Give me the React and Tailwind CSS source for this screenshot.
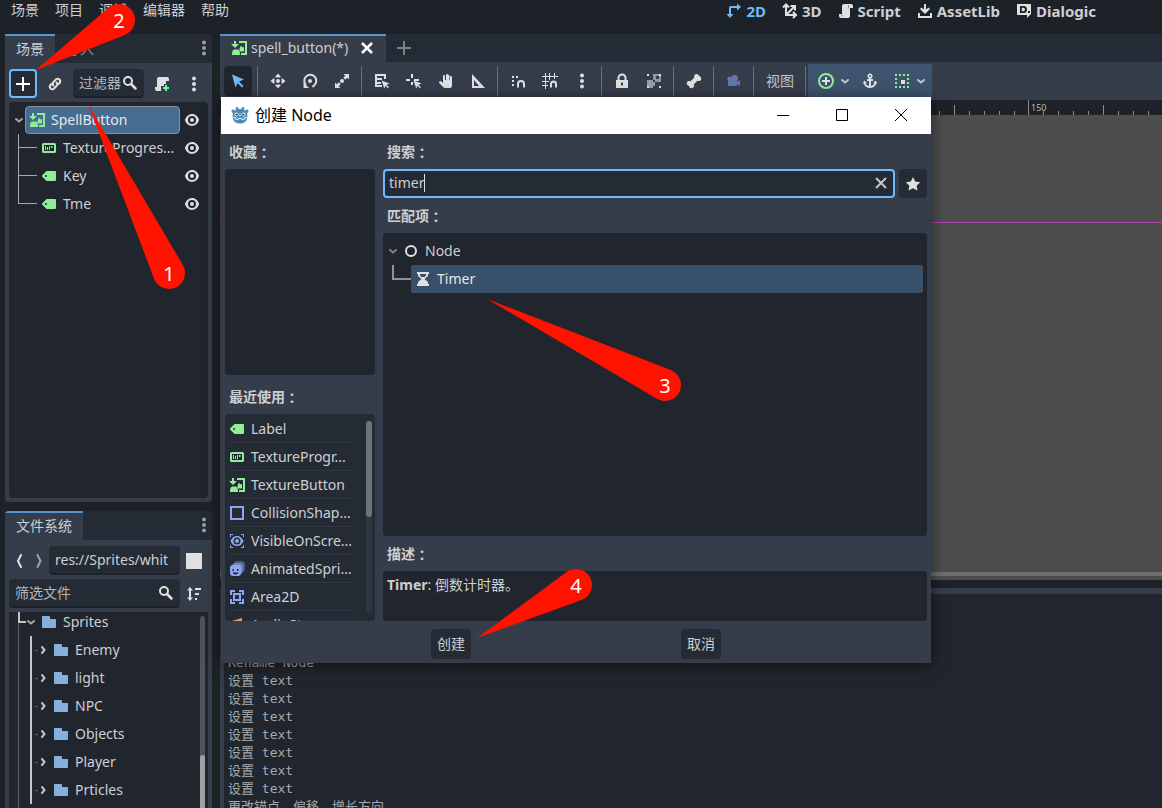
import { useState } from 'react'

const icons = {
  label: <path d="M6 3a1 1 0 0 0-.7.3l-4 4a1 1 0 0 0 0 1.400l4 4A1 1 0 0 0 6 13h8a1 1 0 0 0 1-1V4a1 1 0 0 0-1-1zM5 7a1 1 0 0 1 0 2 1 1 0 0 1 0-2z" fillRule="evenodd" />,
  progress: (
    <>
      <rect x="2" y="4" width="12" height="8" rx="0.5" fill="none" stroke="currentColor" strokeWidth="2" />
      <path d="M4 6h1v4H4zM6 7h1v3H6zM8 6h1v4H8zM10 6h1.500v2H10z" />
    </>
  ),
  texButton: (
    <>
      <path d="M3 1h2v3h3L4 8 0 4h3zM1 15c0-3 .5-5 2-5.500h4c1.500.5 2 2.500 2 5.500z" />
      <path d="M8 1h8v14h-6v-2h4V3H8z" />
      <path d="M10 5.500l1 1.500 2 .5v4H8.500v-3z" />
    </>
  ),
  rect: <rect x="2" y="2" width="12" height="12" fill="none" stroke="currentColor" strokeWidth="2" />,
  visible: (
    <>
      <path d="M1 1h3v1H2v2H1zM12 1h3v3h-1V2h-2zM1 12h1v2h2v1H1zM14 12h1v3h-3v-1h2z" />
      <path d="M8 3C5 3 2.500 5 1.500 8 2.500 11 5 13 8 13s5.500-2 6.500-5C13.500 5 11 3 8 3z M8 4.500a3.500 3.500 0 0 1 0 7 3.500 3.500 0 0 1 0-7z" fillRule="evenodd" />
      <circle cx="8" cy="8" r="2" />
    </>
  ),
  sprite: (
    <>
      <rect x="5" y="0" width="11" height="11" rx="3.500" opacity="0.4" />
      <rect x="3" y="2" width="11" height="11" rx="3.500" opacity="0.6" />
      <rect x="1" y="4" width="11" height="11" rx="3" />
      <path d="M3.500 8h1.500v2H3.500zM8 8h1.500v2H8zM3.500 11.500h6c-.6 1.500-1.700 2-3 2s-2.400-.5-3-2z" fill="#252b34" />
    </>
  ),
  area: (
    <path d="M1 1h5v2H3v3H1zM10 1h5v5h-2V3h-3zM1 10h2v3h3v2H1zM13 10h2v5h-5v-2h3zM4 4h8v8H4zm2 2v4h4V6z" fillRule="evenodd" />
  ),
  audio: <path d="M3 15V4l10-3v14z" />,
  eye: (
    <path d="M8 2C5.400 2 2.200 3.900 1 7.700v.6C2.200 12.200 5.500 14 8 14s5.800-1.800 7-5.700v-.6C13.900 3.900 10.600 2 8 2zm0 2a4 4 0 0 1 0 8 4 4 0 0 1 0-8zm0 2a2 2 0 0 0 0 4 2 2 0 0 0 0-4z" fillRule="evenodd" />
  ),
  folder: <path d="M2 2a1 1 0 0 0-1 1v10a1 1 0 0 0 1 1h12a1 1 0 0 0 1-1V6a1 1 0 0 0-1-1H9V3a1 1 0 0 0-1-1z" />,
  down: <path d="M5 7l3 2.500L11 7" fill="none" stroke="currentColor" strokeWidth="2" strokeLinecap="round" />,
  right: <path d="M7 5l2.500 3L7 11" fill="none" stroke="currentColor" strokeWidth="2" strokeLinecap="round" />,
  back: <path d="M10 2L7 8l3 6" fill="none" stroke="currentColor" strokeWidth="2" strokeLinecap="round" />,
  forward: <path d="M6.500 2l3 6-3 6" fill="none" stroke="currentColor" strokeWidth="2" strokeLinecap="round" />,
  plus: <path d="M7 1h2v6h6v2H9v6H7V9H1V7h6z" />,
  link: (
    <g fill="none" stroke="currentColor" strokeWidth="2" strokeLinecap="round">
      <path d="M6.500 9.500a2.500 2.500 0 0 1 0-3.500l2.700-2.700a2.500 2.500 0 0 1 3.500 3.500L11.500 8" />
      <path d="M9.500 6.500a2.500 2.500 0 0 1 0 3.500l-2.700 2.700a2.500 2.500 0 0 1-3.500-3.500L4.500 8" />
    </g>
  ),
  search: (
    <g fill="none" stroke="currentColor" strokeWidth="2">
      <circle cx="6" cy="6" r="4" />
      <path d="M9 9l4.500 4.500" strokeWidth="2.500" strokeLinecap="round" />
    </g>
  ),
  script: (
    <>
      <path d="M6 1a2 2 0 0 0-2 2v8H1v2a2 2 0 0 0 2 2h7a2 2 0 0 0 2-2V5h3V3a2 2 0 0 0-2-2z" />
      <path d="M10.500 2v3.500M4 11v2.500" stroke="#1d2229" opacity="0.4" />
    </>
  ),
  scriptAdd: (
    <>
      <path d="M5 1a2 2 0 0 0-2 2v8H1v2a2 2 0 0 0 2 2h4v-5h3V8h2V5h3V3a2 2 0 0 0-2-2z" />
      <path d="M11 9h2v2h2v2h-2v2h-2v-2H9v-2h2z" fill="#5fff97" />
    </>
  ),
  dots: (
    <>
      <circle cx="8" cy="2.500" r="2" />
      <circle cx="8" cy="8" r="2" />
      <circle cx="8" cy="13.500" r="2" />
    </>
  ),
  sort: (
    <>
      <path d="M4 1l3 3.500H5v7h2L4 15l-3-3.500h2v-7H1z" />
      <path d="M9 2h6v2H9zM9 7h4v2H9zM9 12h2v2H9z" />
    </>
  ),
  close: <path d="M3 3l10 10M13 3L3 13" stroke="currentColor" strokeWidth="2.500" fill="none" />,
  clear: <path d="M3 3l10 10M13 3L3 13" stroke="currentColor" strokeWidth="2" fill="none" />,
  select: <path d="M2 1.500l12 5-5 2 4.500 4.500-1.500 1.500L7.500 10l-2 4.500z" />,
  move: (
    <>
      <circle cx="8" cy="8" r="2" />
      <path d="M8 .5L11 4 9.500 4.500h-3L5 4zM8 15.500L11 12l-1.500-.5h-3L5 12zM.5 8L4 5l.5 1.500v3L4 11zM15.500 8L12 5l-.5 1.500v3L12 11z" />
    </>
  ),
  rotate: (
    <>
      <path d="M4 12A6 6 0 1 1 12 12.500L10.500 14" fill="none" stroke="currentColor" strokeWidth="2" />
      <circle cx="8" cy="8" r="2" />
      <path d="M1.500 15V9.500l5.500 5.500z" />
    </>
  ),
  scale: (
    <>
      <path d="M9.500 1H15v5.500l-1.800-1.800-2 2-1.900-1.900 2-2zM6.500 15H1V9.500l1.800 1.800 2-2 1.900 1.900-2 2z" />
      <circle cx="8" cy="8" r="2" />
    </>
  ),
  listSelect: (
    <>
      <path d="M1 1h11v5h-2V3H3v2h5v2H3v2h4v2H3v1h5v2H1z" />
      <path d="M7.500 7.500l8 3-3 1.200 2.500 2.500-1 1-2.500-2.500-1.200 3z" />
    </>
  ),
  pivot: (
    <>
      <path d="M5 1h2v4H5zM0 6h4v2H0zM8 6h5v2H8zM5 9h2v3H5z" />
      <path d="M7.500 7.500l8 3-3 1.200 2.500 2.500-1 1-2.500-2.500-1.200 3z" />
    </>
  ),
  pan: (
    <path d="M9 1a1 1 0 0 0-1 1v5H7V3a1 1 0 0 0-2 0v7L3 8.300A1.300 1.300 0 0 0 1.200 10L5 14l1.500 1h6l1.500-1.500V4a1 1 0 0 0-2 0v3h-.5V2.500a1 1 0 0 0-1.500-.5A1 1 0 0 0 9 1z" />
  ),
  ruler: <path d="M2 1v14h13zm2 6l5 6H4z" fillRule="evenodd" />,
  smartSnap: (
    <>
      <path d="M2 3h2v2H2zM2 7h2v2H2zM2 11h2v2H2zM6 3h2v2H6z" />
      <path d="M8 14.500V11a3 3 0 0 1 6 0v3.500" fill="none" stroke="currentColor" strokeWidth="2" />
    </>
  ),
  gridSnap: (
    <>
      <path d="M3 0h1v3h3V0h1v3h4V0h1v3h3v1h-3v2h-1V4H8v3H7V4H4v4h3v1H4v3h2v1H4v3H3v-3H0v-1h3V9H0V8h3V4H0V3h3z" />
      <path d="M9 14.500V11a2.500 2.500 0 0 1 5 0v3.500" fill="none" stroke="currentColor" strokeWidth="2" />
    </>
  ),
  lock: (
    <>
      <path d="M4.500 7.500V5a3.500 3.500 0 0 1 7 0v2.500" fill="none" stroke="currentColor" strokeWidth="2" />
      <path d="M2 7h12v8H2zm5 2.500v3h2v-3z" fillRule="evenodd" />
    </>
  ),
  group: (
    <>
      <path d="M1 1h2v2H1zM13 1h2v2h-2zM1 13h2v2H1zM13 13h2v2h-2z" />
      <path d="M7 1h6v2h2v6h-6V7H7zm3 2v3h3V3z" fillRule="evenodd" opacity="0.55" />
      <path d="M1 7h6v2h2v4H7v2H3v-2H1z" opacity="0.6" />
    </>
  ),
  bone: (
    <path d="M10.500 1a2.500 2.500 0 0 0-2.200 3.600L4.600 8.300A2.500 2.500 0 1 0 3 12.900a2.500 2.500 0 1 0 4.700-1.500l3.700-3.700A2.500 2.500 0 1 0 13 3.100 2.500 2.500 0 0 0 10.500 1z" />
  ),
  camera: (
    <path d="M8.500 2a3 3 0 0 0-3 2.300A2.500 2.500 0 1 0 2 8v3.500A1.500 1.500 0 0 0 3.500 13h6a1.500 1.500 0 0 0 1.500-1.500V11l3 2V7l-3 2V7.300A3 3 0 0 0 8.500 2z" />
  ),
  circlePlus: (
    <>
      <circle cx="8" cy="8" r="7" fill="none" stroke="#8eef97" strokeWidth="2" />
      <path d="M7 4h2v3h3v2H9v3H7V9H4V7h3z" />
    </>
  ),
  anchor: (
    <>
      <circle cx="8" cy="3" r="1.700" fill="none" stroke="currentColor" strokeWidth="1.600" />
      <path d="M7 5h2v1h2v2H9v4.800c1.800-.3 3-1.300 3.500-2.800L11 10l2.500-2.500 2 3-1.200-.2C13.600 13.500 11 15 8 15s-5.600-1.500-6.300-4.700l-1.200.2 2-3L5 10l-1.500.2C4 11.500 5.200 12.500 7 12.800V8H5V6h2z" />
    </>
  ),
  container: (
    <>
      <path d="M1 1h2v2H1zM5 1h2v2H5zM9 1h2v2H9zM13 1h2v2h-2zM1 13h2v2H1zM5 13h2v2H5zM9 13h2v2H9zM13 13h2v2h-2zM1 5h2v2H1zM1 9h2v2H1zM13 5h2v2h-2zM13 9h2v2h-2z" fill="#8eef97" />
      <path d="M7 7h4v4H7z" />
    </>
  ),
  twoD: <path d="M3 5v6H.5L4 15l3.500-4H5V5h6v2.500L15 4l-4-3.500V3H5a2 2 0 0 0-2 2z" />,
  threeD: (
    <g fill="none" stroke="currentColor" strokeWidth="2">
      <path d="M4 2v10h9M4 12l8-8" />
      <path d="M1 4.500L4 1.500l3 3M11 9l3 3-3 3M8.500 3H13v4.500" />
    </g>
  ),
  assetLib: (
    <>
      <path d="M1 10h2v3h10v-3h2v5H1z" />
      <path d="M7 1h2v5.500l2.500-2L13 6l-5 5-5-5 1.500-1.500 2.500 2z" />
    </>
  ),
  dialogic: (
    <path d="M1 1h14v10l-4 4v-3H1zm3 2v7h3.500a3.500 3.500 0 0 0 0-7zm1.800 1.800h1.500a1.700 1.700 0 0 1 0 3.400H5.800zM12 8v2h2V8z" fillRule="evenodd" />
  ),
  star: <path d="M8 1l2.200 4.500 5 .7-3.600 3.500.9 4.900L8 12.300l-4.500 2.300.9-4.900L.8 6.200l5-.7z" />,
  node: <circle cx="8" cy="8" r="5" fill="none" stroke="currentColor" strokeWidth="2" />,
  timer: <path d="M2 1h12v2h-1v2l-3.500 3L13 11v2h1v2H2v-2h1v-2l3.500-3L3 5V3H2zm3 2v1.500L6.500 6h3L11 4.500V3z" fillRule="evenodd" />,
}

function Icon({ name, className = '' }) {
  return (
    <svg viewBox="0 0 16 16" className={`w-4 h-4 flex-shrink-0 ${className}`} fill="currentColor" aria-hidden="true">
      {icons[name]}
    </svg>
  )
}

function GodotLogo() {
  return (
    <svg viewBox="0 0 18 18" className="w-[18px] h-[18px] flex-shrink-0" aria-hidden="true">
      <path
        d="M6.800.8l-2.100.6.2 2.300-1.200.8-1.900-1.300L.2 5l1.500 2v3.500C1.700 15 4.500 17.500 9 17.500s7.300-2.500 7.300-7V7l1.500-2-1.600-1.800-1.900 1.300-1.200-.8.200-2.300-2.100-.6-1 2.200H7.800z"
        fill="#478cbf"
      />
      <path d="M2 11.500l2.500.4.400 1.500 2 .3.500-1.200h3.200l.5 1.200 2-.3.400-1.500 2.500-.4" fill="none" stroke="#fff" strokeWidth="0.900" />
      <circle cx="5.500" cy="8.500" r="2" fill="#fff" />
      <circle cx="12.500" cy="8.500" r="2" fill="#fff" />
      <circle cx="5.700" cy="8.600" r="1.200" fill="#414042" />
      <circle cx="12.300" cy="8.600" r="1.200" fill="#414042" />
      <path d="M8.600 8h.8v2.300h-.8z" fill="#fff" />
    </svg>
  )
}

const menus = ['场景', '项目', '调试', '编辑器', '帮助']

const workspaces = [
  { label: '2D', icon: 'twoD', active: true },
  { label: '3D', icon: 'threeD' },
  { label: 'Script', icon: 'script' },
  { label: 'AssetLib', icon: 'assetLib' },
  { label: 'Dialogic', icon: 'dialogic' },
]

const sceneNodes = [
  { name: 'TextureProgres...', icon: 'progress' },
  { name: 'Key', icon: 'label' },
  { name: 'Tme', icon: 'label' },
]

const folders = ['Enemy', 'light', 'NPC', 'Objects', 'Player', 'Prticles']

const toolGroups = [
  ['move', 'rotate', 'scale'],
  ['listSelect', 'pivot', 'pan', 'ruler'],
  ['smartSnap', 'gridSnap', 'dots'],
  ['lock', 'group'],
  ['bone'],
]

const recent = [
  { name: 'Label', icon: 'label', color: 'text-[#8eef97]' },
  { name: 'TextureProgr...', icon: 'progress', color: 'text-[#8eef97]' },
  { name: 'TextureButton', icon: 'texButton', color: 'text-[#8eef97]' },
  { name: 'CollisionShap...', icon: 'rect', color: 'text-[#8da5f3]' },
  { name: 'VisibleOnScre...', icon: 'visible', color: 'text-[#8da5f3]' },
  { name: 'AnimatedSpri...', icon: 'sprite', color: 'text-[#8da5f3]' },
  { name: 'Area2D', icon: 'area', color: 'text-[#8da5f3]' },
  { name: 'AudioStream...', icon: 'audio', color: 'text-[#fc8f6b]' },
]

const log = ['Rename Node', '设置 text', '设置 text', '设置 text', '设置 text', '设置 text', '设置 text', '设置 text', '更改锚点、偏移、增长方向']

const callouts = [
  { n: 1, tip: [88, 104], center: [169, 273] },
  { n: 2, tip: [36, 70], center: [119, 20] },
  { n: 3, tip: [487, 299], center: [665, 385] },
  { n: 4, tip: [477, 638], center: [576, 585] },
]

function MenuBar() {
  return (
    <header className="h-[34px] flex-shrink-0 flex items-start">
      <nav className="flex pl-[3px]">
        {menus.map((m) => (
          <button key={m} className="h-5 px-2">{m}</button>
        ))}
      </nav>
      <nav className="ml-auto flex gap-4 pr-[66px] text-[15px] font-bold">
        {workspaces.map((w) => (
          <button key={w.label} className={`h-[21px] flex items-center gap-1 ${w.active ? 'text-[#70bafa]' : ''}`}>
            <Icon name={w.icon} className={w.active ? '' : 'text-[#e0e0e0]'} />
            {w.label}
          </button>
        ))}
      </nav>
    </header>
  )
}

function DockTabs({ tabs }) {
  return (
    <div className="h-[29px] flex-shrink-0 flex items-stretch bg-[#252b34] rounded-t-sm">
      {tabs.map((t, i) => (
        <button
          key={t}
          className={`px-[11px] pb-0.5 border-t-2 ${i === 0 ? 'bg-[#363d4a] border-[#5695d0]' : 'border-transparent text-[#8b8e93]'}`}
        >
          {t}
        </button>
      ))}
      <button className="ml-auto w-4 pb-0.5 flex items-center justify-center text-[#9a9da1]" aria-label="Dock options">
        <Icon name="dots" />
      </button>
    </div>
  )
}

function IconButton({ icon, label, className = '' }) {
  return (
    <button className={`w-7 flex-shrink-0 flex items-center justify-center text-[#e0e0e0] ${className}`} aria-label={label}>
      <Icon name={icon} />
    </button>
  )
}

function FilterBox({ placeholder }) {
  return (
    <label className="flex-1 min-w-0 h-[29px] flex items-center px-1.5 bg-[#252b34] border-b-2 border-[#1d2229] rounded-sm">
      <input
        type="text"
        placeholder={placeholder}
        aria-label={placeholder}
        className="flex-1 min-w-0 bg-transparent outline-none placeholder:text-[#b5b7bb] placeholder:opacity-100"
      />
      <Icon name="search" className="text-[#e0e0e0]" />
    </label>
  )
}

function SceneDock() {
  return (
    <section className="flex-1 min-h-0 flex flex-col bg-[#363d4a] rounded-sm">
      <DockTabs tabs={['场景', '导入']} />
      <div className="flex gap-1 px-1 pt-1.5">
        <button
          className="w-7 h-[29px] flex-shrink-0 flex items-center justify-center border-2 border-[#70bafa] rounded-sm bg-[#252b34] text-white"
          aria-label="Add node"
        >
          <Icon name="plus" />
        </button>
        <IconButton icon="link" label="Instantiate scene" />
        <FilterBox placeholder="过滤器" />
        <IconButton icon="scriptAdd" label="Attach script" />
        <IconButton icon="dots" label="Scene options" />
      </div>
      <div className="flex-1 m-1 bg-[#21252d] rounded-sm pt-1">
        <div className="h-7 flex items-center pl-0.5 pr-2">
          <Icon name="down" className="text-[#a6a8ab]" />
          <div className="flex-1 h-full -ml-0.5 mr-1 flex items-center gap-1.5 pl-[3px] bg-[#466d91] border border-[#8b9097] rounded-sm text-[#e6e8ea]">
            <Icon name="texButton" className="text-[#8eef97]" />
            SpellButton
          </div>
          <Icon name="eye" className="text-[#e0e0e0]" />
        </div>
        <ul>
          {sceneNodes.map((n, i) => (
            <li key={n.name} className="h-7 flex items-center pl-[9px] pr-2">
              <span className="w-[19px] h-full flex-shrink-0 flex flex-col">
                <span className="h-1/2 border-l border-b border-[#a6a8ab]" />
                {i < sceneNodes.length - 1 && <span className="h-1/2 border-l border-[#a6a8ab]" />}
              </span>
              <Icon name={n.icon} className="ml-1 mr-1.5 text-[#8eef97]" />
              <span className="flex-1 whitespace-nowrap">{n.name}</span>
              <Icon name="eye" className="text-[#e0e0e0]" />
            </li>
          ))}
        </ul>
      </div>
    </section>
  )
}

function FileSystemDock() {
  return (
    <section className="h-[297px] flex-shrink-0 flex flex-col bg-[#363d4a] rounded-t-sm overflow-hidden">
      <DockTabs tabs={['文件系统']} />
      <div className="flex items-stretch px-1 pt-1.5">
        <button className="w-5 flex items-center justify-center text-[#e0e0e0]" aria-label="Back"><Icon name="back" /></button>
        <button className="w-5 flex items-center justify-center text-[#a0a3a7]" aria-label="Forward"><Icon name="forward" /></button>
        <input
          type="text"
          readOnly
          value="res://Sprites/whit"
          aria-label="Path"
          className="flex-1 min-w-0 h-[29px] px-1.5 bg-[#252b34] border-b-2 border-[#1d2229] rounded-sm outline-none"
        />
        <button className="w-7 flex items-center justify-center" aria-label="Split mode">
          <span className="w-4 h-4 bg-[#e0e0e0]" />
        </button>
      </div>
      <div className="flex px-1 pt-1">
        <FilterBox placeholder="筛选文件" />
        <IconButton icon="sort" label="Sort files" />
      </div>
      <div className="flex-1 min-h-0 mx-1 mt-1 flex bg-[#21252d] overflow-hidden">
        <div className="flex-1 -mt-1 ml-[9px] border-l border-[#5b6068]">
          <div className="relative h-7 flex items-center pl-1">
            <span className="absolute -left-px top-0 w-2 h-[15px] border-l-2 border-b-2 border-[#c4c6c8]" />
            <Icon name="down" className="text-[#a6a8ab]" />
            <Icon name="folder" className="ml-0.5 mr-1.5 text-[#84b1dd]" />
            Sprites
          </div>
          <ul className="ml-[11px] border-l-2 border-[#c4c6c8]">
            {folders.map((f) => (
              <li key={f} className="h-7 flex items-center pl-[3px]">
                <span className="w-[3px] h-px -mr-px bg-[#5b6068]" />
                <Icon name="right" className="-ml-0.5 -mr-px text-[#c4c6c8]" />
                <Icon name="folder" className="ml-[3px] mr-1.5 text-[#84b1dd]" />
                {f}
              </li>
            ))}
          </ul>
        </div>
        <div className="w-[5px] mt-1 mr-[3px] flex flex-col rounded-t-full bg-[#4f535a]">
          <div className="mt-[139px] flex-1 rounded-t-full bg-[#a0a1a3]" />
        </div>
      </div>
    </section>
  )
}

function Separator() {
  return (
    <span className="w-1 flex-shrink-0 flex pl-px">
      <span className="w-px bg-[#6a6f78]" />
    </span>
  )
}

function CanvasToolbar() {
  return (
    <div className="h-[38px] flex-shrink-0 flex items-stretch px-1 bg-[#363d4a] text-[#e0e0e0]">
      <div className="flex gap-1 py-1">
        <IconButton icon="select" label="Select" className="rounded-sm bg-[#21262e] text-[#70bafa]!" />
        <Separator />
        {toolGroups.map((group, i) => (
          <div key={i} className="flex gap-1">
            {group.map((t) => <IconButton key={t} icon={t} label={t} />)}
            <Separator />
          </div>
        ))}
        <IconButton icon="camera" label="Camera override" className="text-[#6376ae]!" />
        <Separator />
        <button className="px-1.5 text-[#c4c6ca]">视图</button>
        <Separator />
      </div>
      <div className="mt-0.5 px-1 pb-0.5 flex gap-1 bg-[#3e536d]">
        <button className="w-10 pl-1.5 flex items-center" aria-label="Anchor preset">
          <Icon name="circlePlus" />
          <Icon name="down" className="ml-[3px] text-[#c4c6ca]" />
        </button>
        <IconButton icon="anchor" label="Anchor mode" />
        <button className="w-10 pl-1.5 flex items-center" aria-label="Container sizing">
          <Icon name="container" />
          <Icon name="down" className="ml-[3px] text-[#c4c6ca]" />
        </button>
      </div>
    </div>
  )
}

// minor tick every 15px, a longer one every 75px
function Ruler() {
  const ticks = Array.from({ length: 15 }, (_, i) => 939 + Math.round(i * 14.9))
  return (
    <div className="relative h-[15px] flex-shrink-0 bg-[#1d2229]">
      <svg className="w-full h-full" aria-hidden="true">
        {ticks.map((x, i) => (
          <rect key={x} x={x - 220} y={i === 6 ? 0 : i % 5 === 1 ? 5 : 11} width="1" height="15" fill="#888b90" />
        ))}
      </svg>
      <span className="absolute left-[811px] top-0 text-[9px] leading-4 text-[#b5b7bb]">150</span>
    </div>
  )
}

function Workspace() {
  return (
    <main className="flex-1 min-w-0 flex flex-col">
      <div className="h-7 flex-shrink-0 flex items-stretch bg-[#252b34]">
        <div className="flex items-center px-[11px] pb-0.5 border-t-2 border-[#5695d0] bg-[#363d4a]">
          <Icon name="texButton" className="text-[#8eef97]" />
          <span className="ml-1 mr-[11px]">spell_button(*)</span>
          <button className="text-white" aria-label="Close tab"><Icon name="close" /></button>
        </div>
        <button className="px-2.5 text-[#7e8186]" aria-label="New scene"><Icon name="plus" /></button>
      </div>
      <CanvasToolbar />
      <Ruler />
      <div className="flex-1 min-h-0 flex flex-col bg-[#4d4d4d] pt-[107px]">
        <div className="h-px bg-[#b23fac]" />
        <div className="mt-auto mb-1 h-1 bg-[#6e6e6e]" />
      </div>
      <div className="h-[228px] flex-shrink-0 pt-2">
        <div className="h-full bg-[#363d4a] pt-1.5 pl-1">
          <div className="h-full overflow-hidden bg-[#21252d] pt-[60px] pl-1">
            {log.map((line, i) => (
              <p key={i} className="text-[13px] leading-[18px] text-[#a6a9ae] font-['DejaVu_Sans_Mono','Noto_Sans_CJK_SC',monospace]">{line}</p>
            ))}
          </div>
        </div>
      </div>
    </main>
  )
}

// the TC face centres the full-width colon in its cell
function Colon() {
  return <span className="font-['Noto_Sans_CJK_TC',sans-serif]" lang="zh-TW">：</span>
}

function Heading({ children, htmlFor }) {
  const Tag = htmlFor ? 'label' : 'h2'
  return (
    <Tag htmlFor={htmlFor} className="h-[27px] flex-shrink-0 px-1 flex items-center font-bold">
      {children}
      <Colon />
    </Tag>
  )
}

function CreateNodeDialog() {
  const [query, setQuery] = useState('timer')

  return (
    <div
      role="dialog"
      aria-label="创建 Node"
      className="absolute left-[221px] top-[97px] w-[710px] h-[566px] flex flex-col bg-[#363d4a] shadow-[0_2px_14px_rgba(0,0,0,0.55)]"
    >
      <div className="h-[37px] flex-shrink-0 flex items-center pl-2.5 pr-px pb-0.5 bg-white text-black text-base">
        <GodotLogo />
        <span className="ml-1.5 mr-auto">创建 Node</span>
        {[
          ['Minimize', 'M0 6.500h12'],
          ['Maximize', 'M.5.5h11v11H.5z'],
          ['Close', 'M0 0l12 12M12 0L0 12'],
        ].map(([label, d]) => (
          <button key={label} className="w-[59px] h-full flex items-center justify-center" aria-label={label}>
            <svg viewBox="0 0 12 12" className="w-3 h-3" fill="none" stroke="#000" strokeWidth="1"><path d={d} /></svg>
          </button>
        ))}
      </div>

      <div className="flex-1 min-h-0 flex gap-2 p-1 pb-0">
        {/* Favorites and history */}
        <div className="w-[150px] flex flex-col gap-1">
          <Heading>收藏</Heading>
          <div className="h-[206px] flex-shrink-0 bg-[#21252d] rounded-sm" />
          <div className="mt-1 flex-1 min-h-0 flex flex-col gap-1">
            <Heading>最近使用</Heading>
            <div className="flex-1 min-h-0 flex pt-px pl-1 pr-[3px] bg-[#252b34] rounded-sm overflow-hidden">
              <ul className="w-[126px] flex-shrink-0">
                {recent.map((r) => (
                  <li key={r.name} className="h-7 flex items-center gap-1.5 border-b border-[#323943] whitespace-nowrap">
                    <Icon name={r.icon} className={r.color} />
                    {r.name}
                  </li>
                ))}
              </ul>
              <div className="ml-auto w-1.5 h-[192px] mt-1.5 rounded-full bg-[#31363f]">
                <div className="h-24 rounded-full bg-[#70747a]" />
              </div>
            </div>
          </div>
        </div>

        {/* Search and matches */}
        <div className="flex-1 min-w-0 flex flex-col gap-1">
          <Heading htmlFor="node-search">搜索</Heading>
          <div className="h-[29px] flex-shrink-0 flex gap-1">
            <div className="relative flex-1 flex items-center px-1 pb-0.5 bg-[#252b34] border-2 border-[#70bafa] rounded-sm">
              <input
                id="node-search"
                type="text"
                value={query}
                onChange={(e) => setQuery(e.target.value)}
                className="flex-1 min-w-0 bg-transparent outline-none"
              />
              <span className="absolute left-[39px] top-[3px] w-px h-[18px] bg-[#e0e0e0]" />
              <button aria-label="Clear" className="text-[#c4c6ca]" onClick={() => setQuery('')}><Icon name="clear" /></button>
            </div>
            <IconButton icon="star" label="Favorite" className="rounded-sm bg-[#252b34]" />
          </div>
          <Heading>匹配项</Heading>
          <div className="flex-1 min-h-0 p-1 bg-[#21252d] rounded-sm">
            <div className="h-7 flex items-center -ml-0.5">
              <Icon name="down" className="text-[#7e8186]" />
              <Icon name="node" className="ml-0.5 mr-1.5 text-[#e0e0e0]" />
              Node
            </div>
            <div className="h-7 flex pl-[5px]">
              <span className="w-[19px] h-[15px] border-l-2 border-b-2 border-[#8f9196]" />
              <div className="flex-1 flex items-center gap-1.5 pl-1 bg-[#39506a] rounded-xs text-[#e6e8ea]">
                <Icon name="timer" className="text-[#e0e0e0]" />
                Timer
              </div>
            </div>
          </div>
          <Heading>描述</Heading>
          <p className="h-[50px] flex-shrink-0 px-1 pt-1 bg-[#21252d] rounded-sm">
            <b>Timer</b>: 倒数计时器。
          </p>
        </div>
      </div>

      <div className="flex-shrink-0 flex justify-evenly pt-2 pb-1">
        {['创建', '取消'].map((b) => (
          <button key={b} className="h-[30px] px-1.5 bg-[#252b34] rounded-sm">{b}</button>
        ))}
      </div>
    </div>
  )
}

// teardrop: two tangents from the tip to a circle
function Callout({ n, tip, center }) {
  const r = 16
  const dx = center[0] - tip[0]
  const dy = center[1] - tip[1]
  const d = Math.hypot(dx, dy)
  const len = Math.sqrt(d * d - r * r)
  const dir = Math.atan2(dy, dx)
  const spread = Math.asin(r / d)
  const at = (a) => `${tip[0] + len * Math.cos(a)} ${tip[1] + len * Math.sin(a)}`
  return (
    <g>
      <path d={`M${tip[0]} ${tip[1]}L${at(dir + spread)}A${r} ${r} 0 1 0 ${at(dir - spread)}Z`} fill="#ff1200" />
      <text x={center[0]} y={center[1] + 8} textAnchor="middle" fontSize="20" fill="#fff">{n}</text>
    </g>
  )
}

export default function App() {
  return (
    <div className="relative h-screen overflow-hidden flex flex-col bg-[#1d2229] text-[#cdcfd2] text-sm leading-5 font-['Noto_Sans','Noto_Sans_CJK_SC',sans-serif]">
      <MenuBar />
      <div className="flex-1 min-h-0 flex gap-2 pl-[5px]">
        <aside className="w-[207px] flex-shrink-0 flex flex-col gap-[9px]">
          <SceneDock />
          <FileSystemDock />
        </aside>
        <Workspace />
      </div>
      <CreateNodeDialog />
      <svg className="absolute inset-0 w-full h-full pointer-events-none">
        {callouts.map((c) => <Callout key={c.n} {...c} />)}
      </svg>
    </div>
  )
}
